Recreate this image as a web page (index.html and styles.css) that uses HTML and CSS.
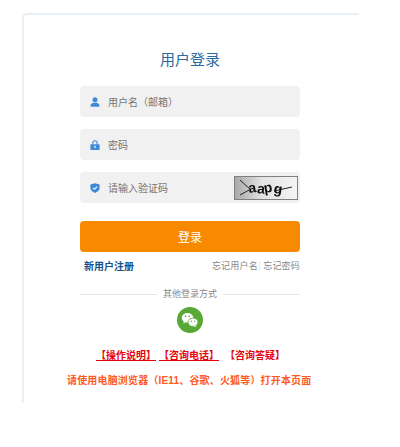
FILE: index.html
```html
<!DOCTYPE html>
<html>
<head>
    <title>用户登录</title>
    <link rel="stylesheet" href="styles.css">
</head>
<body>
    <div class="login-card">
        <div class="login-form">
            <h1 class="login-title">用户登录</h1>
            <div class="input-row">
                <svg class="input-icon" viewBox="0 0 12 12"><circle cx="6" cy="3.300" r="3"/><path d="M.8 11.800V10c0-2 2-3 3.700-3.200h3C9 7 11.200 8 11.200 10v1.800z"/></svg>
                <span class="input-hint">用户名（邮箱）</span>
            </div>
            <div class="input-row">
                <svg class="input-icon" viewBox="0 0 12 12"><path d="M2.800 5.500V3.400a3.200 3.200 0 0 1 6.400 0v2.100H7.900V3.400a1.900 1.900 0 0 0-3.800 0v2.100z"/><path fill-rule="evenodd" d="M1 5h10a.5.5 0 0 1 .5.5v6a.5.5 0 0 1-.5.5H1a.5.5 0 0 1-.5-.5v-6A.5.5 0 0 1 1 5zM6 7a1 1 0 0 0-.5 1.900V10h1V8.900A1 1 0 0 0 6 7z"/></svg>
                <span class="input-hint">密码</span>
            </div>
            <div class="input-row">
                <svg class="input-icon" viewBox="0 0 12 12"><path d="M6 .2l5.500 1.700v4.200C11.500 9 8.800 10.900 6 12 3.200 10.900.5 9 .5 6.100V1.900z"/><path d="M3.600 5.800l1.800 1.800 3-3.200" fill="none" stroke="#fff" stroke-width="1.300"/></svg>
                <span class="input-hint">请输入验证码</span>
                <svg class="captcha" viewBox="0 0 64 24">
                    <defs>
                        <linearGradient id="captcha-bg" x1="0" x2="1" y1="0" y2="0">
                            <stop offset="0" stop-color="#a8a8a8"/>
                            <stop offset="0.450" stop-color="#e4e4e4"/>
                            <stop offset="1" stop-color="#f4f4f4"/>
                        </linearGradient>
                        <filter id="captcha-blur"><feGaussianBlur stdDeviation="0.600"/></filter>
                    </defs>
                    <rect x="0.500" y="0.500" width="63" height="23" fill="url(#captcha-bg)" stroke="#808080"/>
                    <g filter="url(#captcha-blur)">
                        <path d="M6 4l11 10M6 19l9-5M40 15l18-4" stroke="#222" stroke-width="1" fill="none"/>
                        <text class="captcha-text" x="15" y="17" rotate="-8 6 -10 8">aapg</text>
                    </g>
                </svg>
            </div>
            <button class="login-button">登录</button>
            <div class="link-row">
                <a class="register-link">新用户注册</a>
                <span class="forgot-links">忘记用户名<i class="link-sep">|</i> 忘记密码</span>
            </div>
            <div class="other-login">
                <span class="other-line"></span>
                <span class="other-text">其他登录方式</span>
                <span class="other-line"></span>
            </div>
            <div class="wechat-icon">
                <svg viewBox="0 0 26 26">
                    <circle cx="13" cy="13" r="13" fill="#58a835"/>
                    <ellipse cx="10.500" cy="10.800" rx="5.800" ry="4.800" fill="#fff"/>
                    <path d="M7 14l-.8 2.600 3-1.500z" fill="#fff"/>
                    <ellipse cx="16" cy="15.200" rx="5" ry="4.200" fill="#fff" stroke="#58a835" stroke-width="0.800"/>
                    <path d="M18.500 18.500l1 1.800-3-1.200z" fill="#fff"/>
                    <circle cx="8.600" cy="9.400" r=".8" fill="#58a835"/>
                    <circle cx="12.200" cy="9.400" r=".8" fill="#58a835"/>
                    <circle cx="14.300" cy="14.300" r=".7" fill="#58a835"/>
                    <circle cx="17.700" cy="14.300" r=".7" fill="#58a835"/>
                </svg>
            </div>
        </div>
        <div class="help-links">
            <a class="help-link">【操作说明】</a>
            <a class="help-link">【咨询电话】</a>
            <a class="help-link no-line">【咨询答疑】</a>
        </div>
        <p class="browser-tip">请使用电脑浏览器（IE11、谷歌、火狐等）打开本页面</p>
    </div>
</body>
</html>
```

FILE: styles.css
```css
body {
    margin: 13px 41px 0 22px;
    font-family: "Liberation Sans", "Noto Sans CJK SC", sans-serif;
    background-color: #fff;
}

.login-card {
    height: 390px;
    box-sizing: border-box;
    border-top: 2px solid #e8f0f5;
    border-left: 2px solid #e8f0f5;
    border-top-left-radius: 5px;
    padding-left: 56px;
}

.login-form {
    width: 220px;
}

.login-title {
    margin: 0;
    padding-top: 35px;
    height: 36px;
    line-height: 20px;
    font-size: 15px;
    font-weight: normal;
    text-align: center;
    color: #2a6a9c;
}

.input-row {
    display: flex;
    align-items: center;
    height: 31px;
    margin-bottom: 12px;
    padding-left: 10px;
    padding-right: 2px;
    box-sizing: border-box;
    border-radius: 4px;
    background-color: #f1f1f1;
}

.input-icon {
    width: 10px;
    height: 10px;
    margin-right: 8px;
    fill: #3f8ad8;
}

.input-hint {
    flex: 1;
    font-size: 10px;
    color: #757575;
}

.captcha {
    width: 64px;
    height: 24px;
}

.captcha-text {
    font-family: "Liberation Sans", sans-serif;
    font-size: 14px;
    font-weight: bold;
    fill: #111;
}

.login-button {
    display: block;
    width: 100%;
    height: 31px;
    margin-top: 18px;
    border: none;
    border-radius: 4px;
    background-color: #f78a00;
    color: #fff;
    font-family: inherit;
    font-size: 12px;
}

.link-row {
    display: flex;
    justify-content: space-between;
    align-items: center;
    height: 14px;
    margin-top: 6px;
    padding-left: 4px;
    font-size: 10px;
}

.register-link {
    font-weight: bold;
    color: #15508a;
}

.forgot-links {
    font-size: 9px;
    letter-spacing: 0.200px;
    color: #888;
}

.link-sep {
    font-style: normal;
    color: #ddd;
}

.other-login {
    display: flex;
    align-items: center;
    gap: 6px;
    height: 14px;
    margin-top: 14px;
}

.other-line {
    flex: 1;
    height: 1px;
    margin-top: 2px;
    background-color: #e6e6e6;
}

.other-text {
    font-size: 9px;
    color: #888;
}

.wechat-icon {
    display: flex;
    justify-content: center;
    margin-top: 7px;
}

.wechat-icon svg {
    width: 26px;
    height: 26px;
}

.help-links {
    display: flex;
    gap: 3px;
    height: 14px;
    margin-top: 14px;
    padding-left: 16px;
    font-size: 10px;
    font-weight: bold;
}

.help-link {
    display: block;
    width: 60px;
    color: #e8000d;
    border-bottom: 1px solid #e8000d;
}

.help-link.no-line {
    width: 54px;
    margin-left: 3px;
    border-bottom: none;
    white-space: nowrap;
}

.browser-tip {
    margin: 13px 0 0 -13px;
    width: 260px;
    font-size: 10px;
    line-height: 14px;
    letter-spacing: 0.170px;
    font-weight: bold;
    color: #ff5a1f;
}
```
